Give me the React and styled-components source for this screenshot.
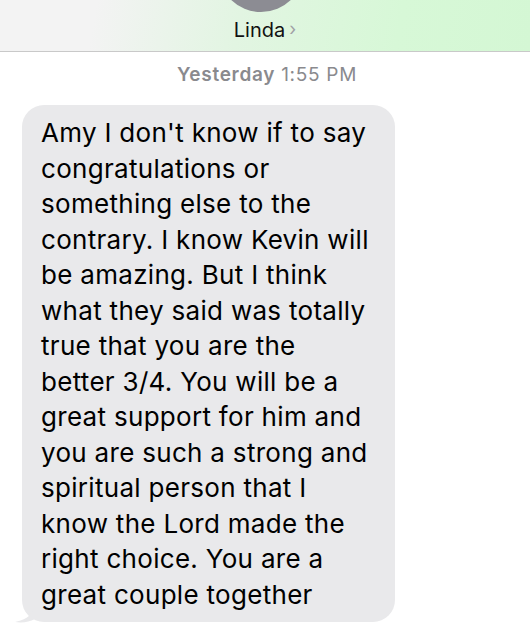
import React from "react";
import styled, { createGlobalStyle } from "styled-components";

const lines = [
  "Amy I don't know if to say",
  "congratulations or",
  "something else to the",
  "contrary. I know Kevin will",
  "be amazing. But I think",
  "what they said was totally",
  "true that you are the",
  "better 3/4. You will be a",
  "great support for him and",
  "you are such a strong and",
  "spiritual person that I",
  "know the Lord made the",
  "right choice. You are a",
  "great couple together",
];

function App() {
  return (
    <Page>
      <Global />
      <Header>
        <Avatar />
        <Name>
          Linda <Chevron>›</Chevron>
        </Name>
      </Header>
      <Stamp>
        <b>Yesterday</b> 1:55 PM
      </Stamp>
      <Thread>
        <Bubble>
          {lines.map((line, i) => (
            <Line key={i}>{line}</Line>
          ))}
          <Tail viewBox="0 0 20 18">
            <path d="M20 0 C18 8 14 14 0 17 C8 18 14 17 20 14 Z" fill="#e9e9eb" />
          </Tail>
        </Bubble>
      </Thread>
    </Page>
  );
}

const Global = createGlobalStyle`
  body {
    margin: 0;
    background: #fff;
    font-family: Inter, "Liberation Sans", sans-serif;
  }
`;

const Page = styled.div`
  width: 530px;
  height: 640px;
  overflow: hidden;
`;

const Header = styled.div`
  height: 51px;
  position: relative;
  border-bottom: 1px solid #c9c9c9;
  background: linear-gradient(100deg, #f3f3f3 18%, #e2f5e2 45%, #d7f8d7 75%, #d4f7d4);
  display: flex;
  justify-content: center;
  overflow: hidden;
`;

const Avatar = styled.div`
  position: absolute;
  width: 86px;
  height: 86px;
  border-radius: 50%;
  background: #8c8c93;
  left: 218px;
  top: -74px;
`;

const Name = styled.div`
  margin-top: 8px;
  font-size: 20px;
  color: #111;
  display: flex;
  align-items: center;
  gap: 4px;
`;

const Chevron = styled.span`
  font-size: 18px;
  color: #a0a0a5;
  margin-top: -2px;
`;

const Stamp = styled.div`
  text-align: center;
  font-size: 19px;
  letter-spacing: 0.7px;
  color: #8a8a8e;
  margin-top: 11px;
  padding-left: 4px;
  b {
    font-weight: 600;
  }
`;

const Thread = styled.div`
  padding: 19px 0 0 22px;
`;

const Bubble = styled.div`
  position: relative;
  width: 373px;
  box-sizing: border-box;
  background: #e9e9eb;
  border-radius: 22px;
  padding: 10px 0 9.5px 19px;
  color: #000;
  font-size: 26px;
  line-height: 35.5px;
  letter-spacing: 0.3px;
`;

const Line = styled.div`
  white-space: nowrap;
`;

const Tail = styled.svg`
  position: absolute;
  left: -7px;
  bottom: -1px;
  width: 20px;
  height: 18px;
`;

export default App;
